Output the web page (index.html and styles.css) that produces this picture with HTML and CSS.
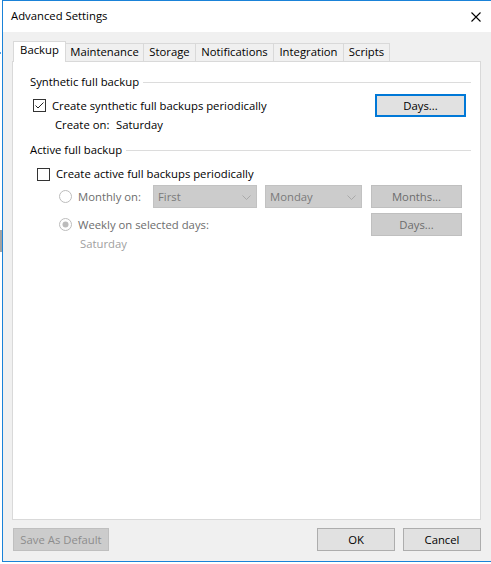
FILE: index.html
```html
<!DOCTYPE html>
<html>
<head>
<meta charset="utf-8">
<title>Advanced Settings</title>
<link rel="stylesheet" href="styles.css">
</head>
<body>
<div class="backdrop-bar"></div>
<div class="backdrop-dot"></div>
<div class="window">
  <div class="titlebar">
    <span class="title">Advanced Settings</span>
    <svg class="close" width="10" height="10" viewBox="0 0 10 10"><path d="M0.5 0.5 L9.5 9.5 M9.5 0.5 L0.5 9.5" stroke="#000" stroke-width="1.1" fill="none"/></svg>
  </div>
  <div class="body">
    <div class="tabs">
      <div class="tab tab-active tab-backup">Backup</div>
      <div class="tab tab-maint">Maintenance</div>
      <div class="tab tab-storage">Storage</div>
      <div class="tab tab-notif">Notifications</div>
      <div class="tab tab-integ">Integration</div>
      <div class="tab tab-scripts">Scripts</div>
    </div>
    <div class="panel">
      <div class="group-title"><span>Synthetic full backup</span><span class="rule"></span></div>
      <div class="row row-synth">
        <span class="checkbox checkbox-synth"><svg width="11" height="11" viewBox="0 0 11 11"><path d="M1.5 5.5 L4 8 L9.5 2.5" stroke="#222" stroke-width="1" fill="none"/></svg></span>
        <span class="label">Create synthetic full backups periodically</span>
        <button class="btn btn-focus btn-days">Days...</button>
      </div>
      <div class="line-row create-on"><span class="create-key">Create on:</span><span>Saturday</span></div>
      <div class="group-title group-active"><span>Active full backup</span><span class="rule"></span></div>
      <div class="line-row row-active">
        <span class="checkbox checkbox-active"></span>
        <span class="label">Create active full backups periodically</span>
      </div>
      <div class="row row-monthly">
        <svg class="radio" width="13" height="13" viewBox="0 0 13 13"><circle cx="6.5" cy="6.5" r="6" fill="#fff" stroke="#bcbcbc" stroke-width="1"/></svg>
        <span class="label label-disabled label-monthly">Monthly on:</span>
        <div class="select select-first"><span>First</span><svg width="9" height="5" viewBox="0 0 9 5"><path d="M0.5 0.5 L4.5 4.5 L8.5 0.5" stroke="#a9a9a9" fill="none"/></svg></div>
        <div class="select select-day"><span>Monday</span><svg width="9" height="5" viewBox="0 0 9 5"><path d="M0.5 0.5 L4.5 4.5 L8.5 0.5" stroke="#a9a9a9" fill="none"/></svg></div>
        <button class="btn btn-disabled btn-months">Months...</button>
      </div>
      <div class="row row-weekly">
        <svg class="radio" width="13" height="13" viewBox="0 0 13 13"><circle cx="6.5" cy="6.5" r="6" fill="#fff" stroke="#bcbcbc" stroke-width="1"/><circle cx="6.5" cy="6.5" r="3" fill="#bcbcbc"/></svg>
        <span class="label label-disabled">Weekly on selected days:</span>
        <button class="btn btn-disabled btn-days2">Days...</button>
      </div>
      <div class="line-row weekly-value">Saturday</div>
    </div>
    <div class="footer">
      <button class="btn btn-disabled btn-save">Save As Default</button>
      <button class="btn btn-ok">OK</button>
      <button class="btn btn-cancel">Cancel</button>
    </div>
  </div>
</div>
</body>
</html>
```

FILE: styles.css
```css
* { box-sizing: border-box; }
html, body { margin: 0; padding: 0; }
body {
  background: #ffffff;
  width: 491px;
  height: 564px;
  overflow: hidden;
  position: relative;
  font-family: "Open Sans", "Noto Sans", sans-serif;
  font-size: 11.3px;
  line-height: 16px;
  color: #000;
}
.backdrop-bar {
  position: absolute;
  left: 0; top: 230px;
  width: 2px; height: 22px;
  background: #a3a3a3;
}
.backdrop-dot {
  position: absolute;
  left: 0; top: 52px;
  width: 1px; height: 2px;
  background: #5a9fdc;
}
.window {
  margin-left: 2px;
  width: 489px;
  border-left: 1px solid #1a82d8;
  border-top: 1px solid #1a82d8;
  border-bottom: 1px solid #1a82d8;
  overflow: hidden;
}
.titlebar {
  height: 31px;
  background: #fff;
  display: flex;
  align-items: flex-start;
  padding: 7px 0 0 8px;
}
.title { line-height: 16px; }
.close { margin-left: auto; margin-right: 10px; margin-top: 4px; }
.body {
  height: 529px;
  background: #f0f0f0;
  padding-top: 9px;
}
.tabs {
  display: flex;
  align-items: flex-end;
  height: 20px;
  margin-left: 10px;
}
.tab {
  height: 18px;
  border: 1px solid #d9d9d9;
  border-bottom: none;
  background: #f0f0f0;
  text-align: center;
  line-height: 16px;
  margin-left: -1px;
  white-space: nowrap;
}
.tab-active {
  height: 21px;
  margin-left: 0;
  margin-bottom: -1px;
  background: #fff;
  position: relative;
  z-index: 1;
}
.tab-backup { width: 53px; }
.tab-maint { width: 79px; }
.tab-storage { width: 53px; }
.tab-notif { width: 79px; }
.tab-integ { width: 71px; }
.tab-scripts { width: 47px; }
.panel {
  margin-left: 9px;
  width: 469px;
  height: 459px;
  background: #fff;
  border: 1px solid #d9d9d9;
  padding: 12px 9px 0 17px;
}
.group-title {
  display: flex;
  height: 16px;
  white-space: nowrap;
}
.group-title .rule {
  flex: 1;
  height: 1px;
  margin-top: 8px;
  margin-left: 4px;
  background: #dcdcdc;
}
.group-active { margin-top: 9px; }
.row {
  display: flex;
  align-items: center;
  height: 23px;
  white-space: nowrap;
}
.line-row {
  display: flex;
  align-items: center;
  height: 16px;
  white-space: nowrap;
}
.row-synth { margin-top: 4px; }
.checkbox {
  width: 13px;
  height: 13px;
  border: 1px solid #333;
  background: #fff;
  display: flex;
  align-items: center;
  justify-content: center;
  flex: none;
}
.checkbox-synth { margin-left: 3px; }
.checkbox-active { margin-left: 7px; }
.label { margin-left: 6px; }
.label-disabled { color: #6d6d6d; }
.label-monthly { width: 75px; }
.create-on { margin-left: 25px; }
.create-key { width: 61px; }
.row-active { margin-top: 8px; height: 16px; }
.row-monthly { margin-top: 3px; }
.row-monthly .radio, .row-weekly .radio { margin-left: 29px; flex: none; }
.row-weekly { margin-top: 5px; }
.weekly-value { margin-left: 50px; color: #a0a0a0; }
.btn {
  font: inherit;
  line-height: 16px;
  height: 23px;
  padding: 0;
  background: #e1e1e1;
  border: 1px solid #adadad;
  color: #000;
  text-align: center;
  white-space: nowrap;
}
.btn-focus { border: 2px solid #0078d7; }
.btn-disabled {
  background: #cccccc;
  border-color: #bfbfbf;
  color: #6d6d6d;
}
.btn-days { width: 91px; margin-left: auto; margin-right: 5px; }
.btn-months { width: 91px; margin-left: 9px; }
.btn-days2 { width: 91px; margin-left: auto; margin-right: 9px; }
.select {
  height: 23px;
  background: #cccccc;
  border: 1px solid #c2c2c2;
  color: #7a7a7a;
  display: flex;
  align-items: center;
  justify-content: space-between;
  padding: 0 5px 0 4px;
}
.select svg { margin-top: 1px; }
.select-first { width: 104px; }
.select-day { width: 97px; margin-left: 8px; }
.footer {
  display: flex;
  margin-top: 8px;
  padding: 0 10px;
}
.btn-save { width: 96px; color: #8c8c8c; }
.btn-ok { width: 78px; margin-left: auto; }
.btn-cancel { width: 78px; margin-left: 8px; }
```
